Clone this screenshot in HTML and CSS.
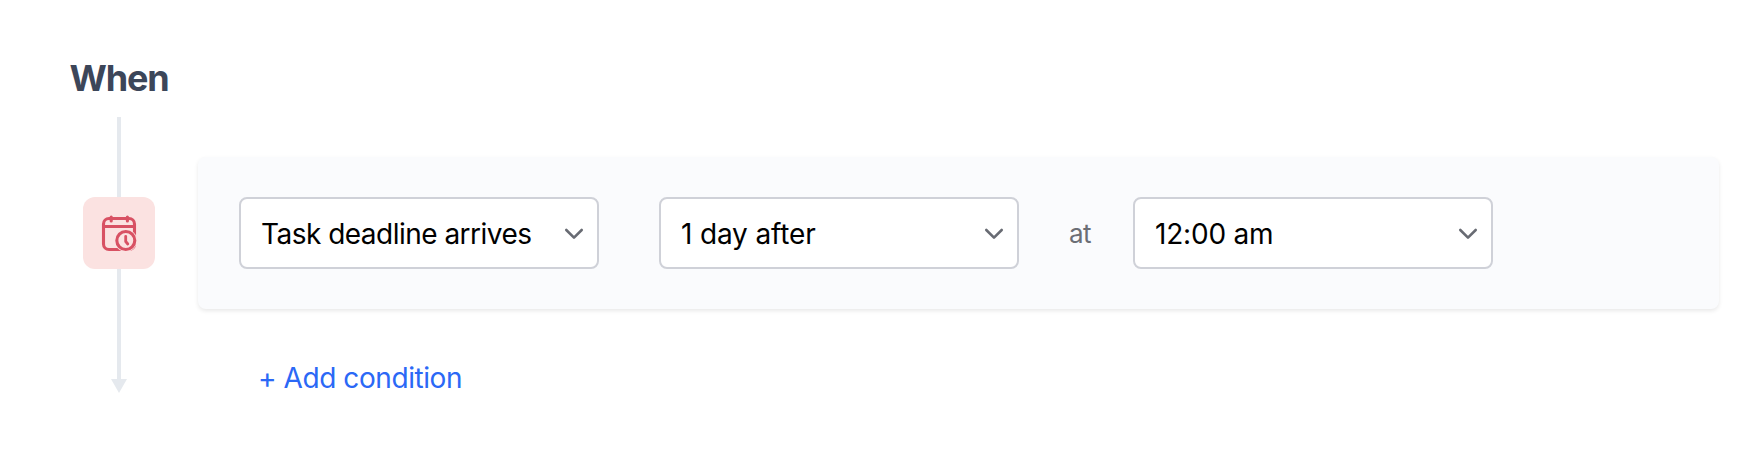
FILE: index.html
```html
<!DOCTYPE html>
<html lang="en">
<head>
  <meta charset="UTF-8" />
  <meta name="viewport" content="width=device-width, initial-scale=1.0"/>
  <title>Automation trigger</title>
  <link rel="stylesheet" href="styles.css">
</head>
<body>
  <div class="trigger">
    <div class="timeline">
      <h2 class="title">When</h2>
      <div class="line line-top"></div>
      <div class="icon-box">
        <svg width="40" height="40" viewBox="0 0 40 40" fill="none" stroke="#d85163" stroke-width="3.1" stroke-linecap="round">
          <rect x="4.5" y="5.5" width="31" height="31" rx="5.5"/>
          <path d="M5 13.5h30"/>
          <path d="M12.2 4v4M28.4 4v4"/>
          <circle cx="26.8" cy="27.5" r="11.2" fill="#fbe2e1" stroke="none"/>
          <circle cx="26.8" cy="27.5" r="9"/>
          <path d="M26.7 23.3v5.2l2.1 2.5" stroke-linejoin="round" stroke-width="2.8"/>
        </svg>
      </div>
      <div class="line line-bottom"></div>
      <div class="arrow"></div>
    </div>

    <div class="content">
      <div class="card">
        <div class="select-wrap">
          <select class="event" aria-label="Event">
            <option>Task deadline arrives</option>
          </select>
          <svg class="chevron" width="20" height="12" viewBox="0 0 20 12"><path d="M2.3 2l7.7 7.6L17.7 2"/></svg>
        </div>
        <div class="select-wrap">
          <select class="offset" aria-label="Offset">
            <option>1 day after</option>
          </select>
          <svg class="chevron" width="20" height="12" viewBox="0 0 20 12"><path d="M2.3 2l7.7 7.6L17.7 2"/></svg>
        </div>
        <span class="at">at</span>
        <div class="select-wrap">
          <select class="time" aria-label="Time">
            <option>12:00 am</option>
          </select>
          <svg class="chevron" width="20" height="12" viewBox="0 0 20 12"><path d="M2.3 2l7.7 7.6L17.7 2"/></svg>
        </div>
      </div>
      <button class="add-btn" type="button">+ Add condition</button>
    </div>
  </div>
</body>
</html>
```

FILE: styles.css
```css
* {
  box-sizing: border-box;
}
body {
  margin: 0;
  background: #fff;
  font-family: Inter, "Liberation Sans", sans-serif;
}
.trigger {
  display: flex;
  height: 449px;
  padding-left: 59px;
}
.timeline {
  display: flex;
  flex-direction: column;
  align-items: center;
  width: 120px;
  padding-top: 56px;
}
.title {
  margin: 0;
  font-size: 36px;
  line-height: 44px;
  font-weight: 700;
  letter-spacing: -1.1px;
  color: #3c4659;
}
.line {
  width: 4px;
  background: #e5e9ee;
}
.line-top {
  height: 80px;
  margin-top: 17px;
}
.line-bottom {
  height: 110px;
}
.arrow {
  border: 8px solid transparent;
  border-top: 14px solid #e5e9ee;
  border-bottom: 0;
}
.icon-box {
  display: flex;
  align-items: center;
  justify-content: center;
  width: 72px;
  height: 72px;
  border-radius: 12px;
  background: #fbe2e1;
}
.content {
  padding: 157px 0 0 19px;
}
.card {
  display: flex;
  align-items: center;
  width: 1521px;
  height: 152px;
  padding-left: 41px;
  border-radius: 8px;
  background: #fafbfd;
  box-shadow: 0 2px 4px rgba(0,0,0,0.09);
}
.select-wrap {
  position: relative;
  width: 360px;
  height: 72px;
}
.select-wrap + .select-wrap {
  margin-left: 60px;
}
select {
  appearance: none;
  display: block;
  width: 100%;
  height: 100%;
  padding: 2px 50px 0 20px;
  border: 2px solid #cfd1d8;
  border-radius: 8px;
  background: #fff;
  color: #000;
  font-family: inherit;
  font-size: 28px;
}
.event {
  letter-spacing: -0.52px;
}
.offset {
  letter-spacing: -0.15px;
}
.time {
  letter-spacing: -0.2px;
}
.chevron {
  position: absolute;
  right: 15px;
  top: 31px;
  fill: none;
  stroke: #686b73;
  stroke-width: 2.6;
  stroke-linecap: round;
  stroke-linejoin: round;
  pointer-events: none;
}
.at {
  width: 114px;
  padding: 1px 0 0 50px;
  font-size: 26px;
  letter-spacing: -0.5px;
  color: #6b6e75;
}
.add-btn {
  display: block;
  margin: 51px 0 0 60px;
  padding: 0;
  border: none;
  background: none;
  color: #2b68f6;
  font-family: inherit;
  font-size: 28px;
  line-height: 36px;
  letter-spacing: -0.42px;
  cursor: pointer;
}
```
